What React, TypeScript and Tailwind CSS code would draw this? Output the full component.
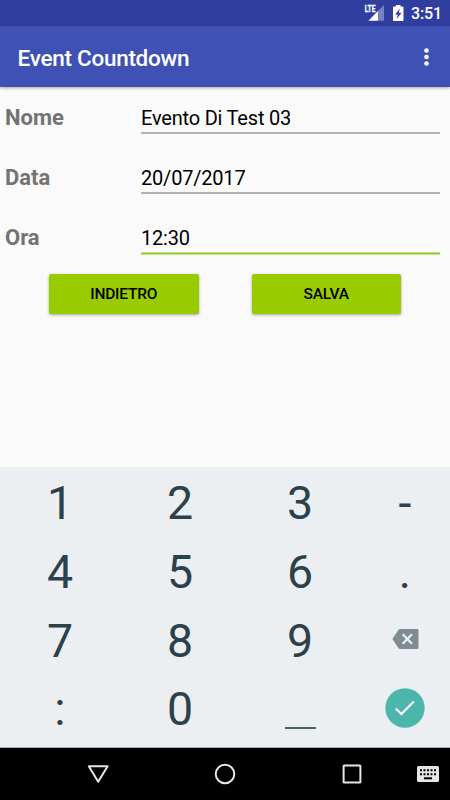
import { ReactNode } from 'react';
import clsx from 'clsx';

const fields = [
  { label: 'Nome', value: 'Evento Di Test 03', focused: false },
  { label: 'Data', value: '20/07/2017', focused: false },
  { label: 'Ora', value: '12:30', focused: true },
];

function StatusBar() {
  return (
    <div className="flex h-[26px] items-center justify-end bg-[#303f9f] pr-[8px] text-white">
      <svg className="h-[26px] w-[47px]" viewBox="0 0 47 26">
        <text x="0.700" y="12.200" fontSize="9" fontWeight="700" textLength="10.800" lengthAdjust="spacingAndGlyphs" fill="#fff" stroke="#fff" strokeWidth="0.300">LTE</text>
        <path d="M14 10.900v9.900H4.300z" fill="#fff" />
        <path d="M14 10.900 20 5v15.800h-6z" fill="#7782c0" />
        <path d="M30 6.500h2V5h4.500v1.500h2c.6 0 1 .4 1 1v12.500c0 .6-.4 1-1 1H30c-.6 0-1-.4-1-1V7.500c0-.6.4-1 1-1z" fill="#fff" />
        <path d="M36 8.500 31 14.500h2.800L32.600 19l5-6.200h-2.900z" fill="#303f9f" />
      </svg>
      <span className="w-[31px] pt-px text-[16px] font-medium leading-none tracking-[-0.1px]">3:51</span>
    </div>
  );
}

function Toolbar() {
  return (
    <div className="relative flex h-[61px] items-center justify-between bg-[#3f51b5] pl-[17.5px] pr-[21.5px] shadow-[0_1px_3px_rgba(0,0,0,0.35)]">
      <h1 className="pt-[4px] text-[22.5px] font-medium leading-none tracking-[-0.27px] text-white">Event Countdown</h1>
      <svg className="h-[20px] w-[5px]" viewBox="0 0 5 20" fill="#fff">
        <circle cx="2.500" cy="3.500" r="2.300" />
        <circle cx="2.500" cy="10" r="2.300" />
        <circle cx="2.500" cy="16.500" r="2.300" />
      </svg>
    </div>
  );
}

function Key({ children }: { children?: ReactNode }) {
  return <div className="flex items-center justify-center">{children}</div>;
}

function Keyboard() {
  return (
    <div className="h-[281px] border-b border-[#a9abac] bg-[#eceff1] text-[46.5px] leading-none text-[#2c414b]">
      <div className="h-[3px] bg-[#f0f0ef]" />
      <div className="-mt-px grid h-[275px] grid-cols-[120px_120px_120px_90px] grid-rows-4">
        <Key>1</Key>
        <Key>2</Key>
        <Key>3</Key>
        <Key>-</Key>
        <Key>4</Key>
        <Key>5</Key>
        <Key>6</Key>
        <Key>.</Key>
        <Key>7</Key>
        <Key>8</Key>
        <Key>9</Key>
        <Key>
          <svg className="mb-[4px] h-[20px] w-[27px]" viewBox="0 0 27 20">
            <path d="M8 0h17.200c.8 0 1.300.6 1.300 1.300v17.400c0 .8-.5 1.300-1.300 1.300H8c-.7 0-1.200-.3-1.500-.8L.4 10l6.100-9.200C6.800.3 7.300 0 8 0z" fill="#7f8c91" />
            <path d="M10.700 5.300 20 14.800M20 5.300 10.700 14.800" stroke="#eceff1" strokeWidth="2.300" />
          </svg>
        </Key>
        <Key>:</Key>
        <Key>0</Key>
        <Key>
          <div className="mt-[37px] h-[2px] w-[31px] bg-[#4a6069]" />
        </Key>
        <Key>
          <svg className="mb-[4px] h-[40px] w-[40px]" viewBox="0 0 40 40">
            <circle cx="20" cy="20" r="19.700" fill="#4db6ac" />
            <path d="M10.800 20.500 16.400 26 28.800 13.600" fill="none" stroke="#fff" strokeWidth="2.100" />
          </svg>
        </Key>
      </div>
    </div>
  );
}

function NavBar() {
  return (
    <div className="grid h-[52px] grid-cols-[35px_126px_127px_127px_26px] items-center justify-items-center bg-black">
      <span />
      <svg className="h-[20px] w-[22px]" viewBox="0 0 22 20">
        <path d="M1.800 2.300h18.800L11.200 17.800z" fill="none" stroke="#e6e6e6" strokeWidth="2" strokeLinejoin="round" />
      </svg>
      <svg className="h-[22px] w-[22px]" viewBox="0 0 22 22">
        <circle cx="11" cy="11" r="9.300" fill="none" stroke="#e6e6e6" strokeWidth="2" />
      </svg>
      <svg className="h-[20px] w-[20px]" viewBox="0 0 20 20">
        <rect x="1.600" y="1.600" width="16.800" height="16.800" rx="0.500" fill="none" stroke="#e6e6e6" strokeWidth="2" />
      </svg>
      <svg className="h-[16px] w-[22px]" viewBox="0 0 22 16">
        <rect width="22" height="16" rx="1.500" fill="#e6e6e6" />
        <path d="M3 4.200h16M3 8.300h16" stroke="#000" strokeWidth="2" strokeDasharray="2 1.500" />
        <path d="M7 12.300h8" stroke="#000" strokeWidth="2" />
      </svg>
    </div>
  );
}

export default function App() {
  return (
    <div className="flex h-[800px] w-[450px] flex-col overflow-hidden bg-[#fafafa] font-[Roboto,sans-serif]">
      <StatusBar />
      <Toolbar />
      <div className="flex-1">
        {fields.map(field => (
          <div key={field.label} className="flex h-[60px] items-start pl-[5px] pr-[10px]">
            <div className="w-[136px] pt-[19px] text-[22px] font-bold leading-[24px] text-[#737373]">{field.label}</div>
            <div
              className={clsx(
                'h-[47px] flex-1 pt-[19px] text-[20px] leading-[24px] tracking-[-0.2px] text-black',
                field.focused
                  ? 'border-b border-[#8fcb1f] shadow-[0_1px_0_#c4e28c,inset_0_-1px_0_#c4e28c]'
                  : 'border-b-2 border-[#b3b3b3]'
              )}
            >
              {field.value}
            </div>
          </div>
        ))}
        <div className="flex gap-[53px] pl-[49px] pt-[7px]">
          {['INDIETRO', 'SALVA'].map(label => (
            <button
              key={label}
              className="h-[40px] w-[149.5px] rounded-[2px] bg-[#99cc00] pt-[2px] text-[15.5px] font-medium tracking-[-0.2px] text-black shadow-[0_1px_3px_rgba(0,0,0,0.35)]"
            >
              {label}
            </button>
          ))}
        </div>
      </div>
      <Keyboard />
      <NavBar />
    </div>
  );
}
